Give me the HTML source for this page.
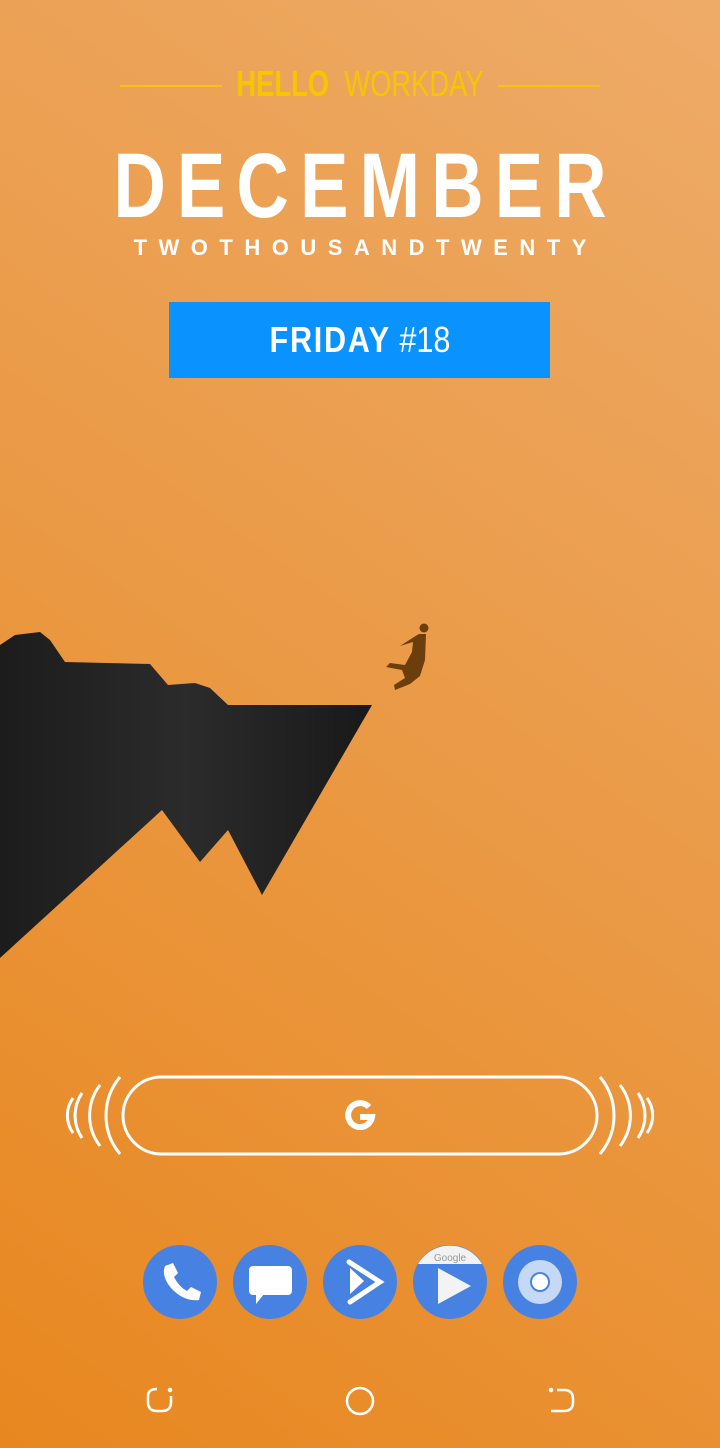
<!DOCTYPE html>
<html><head><style>
html,body{margin:0;padding:0}
body{width:720px;height:1448px;position:relative;overflow:hidden;background:linear-gradient(215deg,#eeab68 0%,#eb9d4c 40%,#e8871f 100%);font-family:"Liberation Sans",sans-serif}
.a{position:absolute}
.c{left:0;width:720px;text-align:center}
</style></head><body>
<div class="a" style="left:120px;top:85px;width:102px;height:2px;background:#f7c600"></div>
<div class="a" style="left:498px;top:85px;width:102px;height:2px;background:#f7c600"></div>
<div class="a c" style="top:64px;font-size:36px;line-height:40px;color:#f7c600;transform:scaleX(0.76)"><b>HELLO</b>&nbsp; <span style="font-weight:300">WORKDAY</span></div>
<div class="a c" style="top:138px;font-size:92px;line-height:96px;font-weight:bold;color:#fff;letter-spacing:14px;transform:scaleX(0.79);padding-left:14px;box-sizing:border-box">DECEMBER</div>
<div class="a c" style="top:235px;font-size:22px;line-height:26px;font-weight:bold;color:#fff;letter-spacing:11.5px;padding-left:11.5px;box-sizing:border-box">TWOTHOUSANDTWENTY</div>
<div class="a" style="left:169px;top:302px;width:381px;height:76px;background:#0a93fe"></div>
<div class="a c" style="top:320px;font-size:36px;line-height:40px;color:#fff;transform:scaleX(0.85)"><b style="letter-spacing:2px">FRIDAY</b> <span style="font-weight:300">#18</span></div>
<svg class="a" style="left:0;top:0" width="720" height="1448">
<defs><linearGradient id="g" x1="0" y1="0" x2="1" y2="0"><stop offset="0" stop-color="#1c1c1c"/><stop offset=".5" stop-color="#2b2b2b"/><stop offset="1" stop-color="#191919"/></linearGradient></defs>
<path d="M0,645 L15,635 L40,632 L50,640 L65,662 L150,664 L168,685 L195,683 L210,688 L228,705 L372,705 L262,895 L228,830 L200,862 L162,810 L0,958 Z" fill="url(#g)"/>
<circle cx="424" cy="628" r="4.5" fill="#6b3e0c"/>
<path d="M419,634 L426,634 L425,660 L420,676 L410,684 L395,690 L394,685 L405,678 L402,670 L386,667 L390,663 L405,665 L412,652 L413,642 L400,646 L414,637 Z" fill="#6b3e0c"/>
<g fill="none" stroke="#fff" stroke-width="3">
<rect x="123" y="1077" width="474" height="77" rx="38.5"/>
<path d="M120,1077 A60,60 0 0 0 120,1154"/><path d="M100,1085 A50,50 0 0 0 100,1146"/><path d="M82,1093 A40,40 0 0 0 82,1138"/><path d="M73,1098 A30,30 0 0 0 73,1133"/>
<path d="M600,1077 A60,60 0 0 1 600,1154"/><path d="M620,1085 A50,50 0 0 1 620,1146"/><path d="M638,1093 A40,40 0 0 1 638,1138"/><path d="M647,1098 A30,30 0 0 1 647,1133"/>
</g>
<path d="M369,1107 A12,12 0 1 0 372,1117 L360,1117" fill="none" stroke="#fff" stroke-width="6"/>
<g>
<circle cx="180" cy="1282" r="37" fill="#4782e3"/>
<path d="M165,1266 l8,-3 l5,10 l-4,4 q5,10 13,14 l4,-4 l10,5 l-2,8 q-15,2 -28,-12 q-10,-12 -6,-22z" fill="#fff"/>
<circle cx="270" cy="1282" r="37" fill="#4782e3"/>
<rect x="249" y="1266" width="43" height="29" rx="4" fill="#fff"/><path d="M256,1294 l8,0 l-8,10z" fill="#fff"/>
<circle cx="360" cy="1282" r="37" fill="#4782e3"/>
<path d="M350,1268 l0,26 l14,-13z" fill="#fff"/><path d="M349,1262 l31,20 l-30,20" fill="none" stroke="#fff" stroke-width="5" stroke-linecap="round"/>
<circle cx="450" cy="1282" r="37" fill="#4782e3"/>
<path d="M418,1264 A37,37 0 0 1 482,1264 Z" fill="#f2f2f2"/>
<text x="450" y="1261" font-size="10" fill="#9a9a9a" text-anchor="middle" font-family="Liberation Sans">Google</text>
<path d="M438,1268 l0,36 l33,-18z" fill="#f3f3f3"/>
<circle cx="540" cy="1282" r="37" fill="#4782e3"/>
<circle cx="540" cy="1282" r="22" fill="#c5d8f6"/>
<circle cx="540" cy="1282" r="10" fill="#4782e3"/><circle cx="540" cy="1282" r="8" fill="#fff"/>
</g>
<g fill="none" stroke="#fff" stroke-width="2.5">
<path d="M157,1389 q-9,0 -9,7 v6 q0,9 9,9 h5 q9,0 9,-9 v-6"/><circle cx="170" cy="1390" r="1" fill="#fff"/>
<circle cx="360" cy="1401" r="13"/>
<path d="M557,1390 h7 q9,0 9,9 v3 q0,9 -9,9 h-13"/><circle cx="551" cy="1390" r="1" fill="#fff"/>
</g>
</svg>
</body></html>
